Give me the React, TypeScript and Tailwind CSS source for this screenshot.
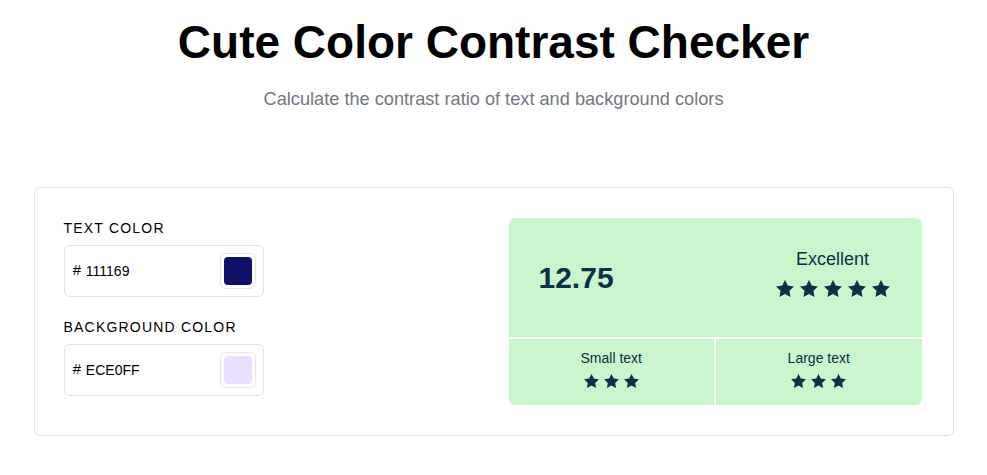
import React from "react";

const navy = "text-[#0e2f48]";

function Star({ size }: { size: "lg" | "sm" }) {
  return (
    <svg
      viewBox="0 0 20 19"
      className={size === "lg" ? "w-[18px] h-[17px]" : "w-[15px] h-[14px]"}
      fill="#0e2f48"
    >
      <polygon points="10,0 13.09,6.26 20,7.27 15,12.14 16.18,19 10,15.77 3.82,19 5,12.14 0,7.27 6.91,6.26" />
    </svg>
  );
}

function Stars({ count, size }: { count: number; size: "lg" | "sm" }) {
  return (
    <div className={`flex items-center ${size === "lg" ? "gap-[6px]" : "gap-[5px]"}`}>
      {Array.from({ length: count }).map((_, i) => (
        <Star key={i} size={size} />
      ))}
    </div>
  );
}

function ColorField({ label, value, swatch }: { label: string; value: string; swatch: string }) {
  return (
    <div className="flex flex-col">
      <label className="text-[14px] leading-5 tracking-[1.2px] text-black mb-[7px]">{label}</label>
      <div className="w-[200px] h-[52px] border border-[#e2e2e2] rounded-md flex items-center justify-between pl-[8px] pr-[7px]">
        <div className="flex items-center text-black">
          <span className="italic text-[15px] mr-[5px] -mt-[1px]">#</span>
          <span className="text-[14px]">{value}</span>
        </div>
        <div className="w-[36px] h-[36px] rounded-md border border-[#e6e6e6] p-[3px] bg-white">
          <div className="w-full h-full rounded-[4px]" style={{ backgroundColor: swatch }} />
        </div>
      </div>
    </div>
  );
}

export default function App() {
  return (
    <div className="min-h-screen bg-white font-['Liberation_Sans',Arial,sans-serif]">
      {/* Header */}
      <div className="flex flex-col items-center pt-[14px]">
        <h1 className="text-[46px] leading-[56px] font-bold text-black">Cute Color Contrast Checker</h1>
        <p className="text-[18.2px] leading-6 text-[#737880] mt-[17px]">
          Calculate the contrast ratio of text and background colors
        </p>
      </div>

      {/* Card */}
      <div className="w-[920px] mx-auto mt-[76px] border border-[#e2e2e2] rounded-md flex justify-between pl-[29px] pr-[31px] pt-[30px] pb-[30px]">
        <div className="flex flex-col gap-[20px]">
          <ColorField label="TEXT COLOR" value="111169" swatch="#111169" />
          <ColorField label="BACKGROUND COLOR" value="ECE0FF" swatch="#ECE0FF" />
        </div>

        <div className="w-[413px] h-[187px] rounded-md overflow-hidden flex flex-col gap-[2px] bg-white">
          <div className="h-[119px] bg-[#c9f7cd] flex items-center justify-between pl-[30px] pr-[32px]">
            <span className={`text-[30px] font-bold ${navy}`}>12.75</span>
            <div className="flex flex-col items-center pb-[11px]">
              <span className={`text-[18px] leading-6 mb-[9px] ${navy}`}>Excellent</span>
              <Stars count={5} size="lg" />
            </div>
          </div>
          <div className="flex-1 grid grid-cols-2 gap-[2px]">
            <div className="bg-[#c9f7cd] flex flex-col items-center justify-center pb-[9px]">
              <span className={`text-[14px] leading-5 mb-[6px] ${navy}`}>Small text</span>
              <Stars count={3} size="sm" />
            </div>
            <div className="bg-[#c9f7cd] flex flex-col items-center justify-center pb-[9px]">
              <span className={`text-[14px] leading-5 mb-[6px] ${navy}`}>Large text</span>
              <Stars count={3} size="sm" />
            </div>
          </div>
        </div>
      </div>
    </div>
  );
}
